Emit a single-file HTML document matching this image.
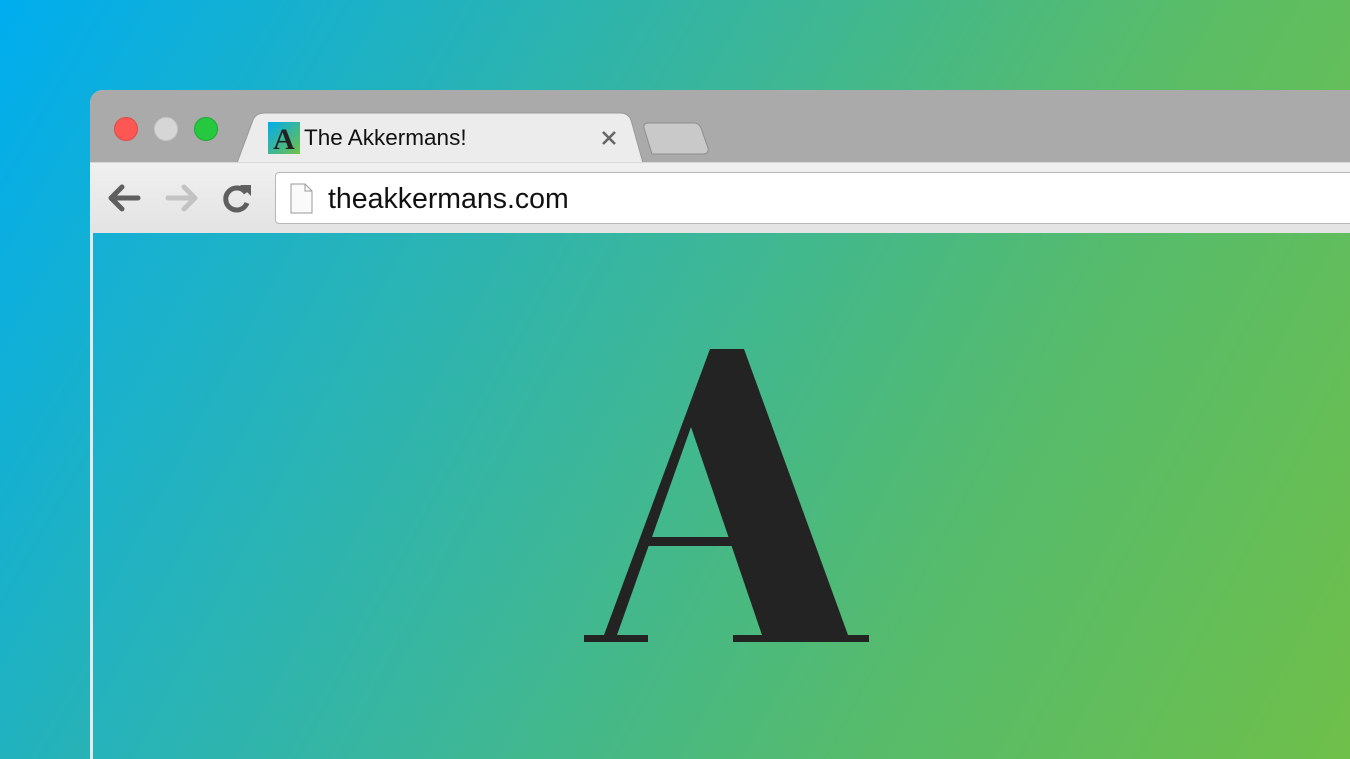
<!DOCTYPE html>
<html><head><meta charset="utf-8"><style>
*{margin:0;padding:0;box-sizing:border-box}
html,body{width:1350px;height:759px;overflow:hidden}
body{position:relative;background:linear-gradient(120deg,#00adef 0%,#36b5a0 40%,#5dbd63 70%,#76c043 100%);font-family:"Liberation Sans",sans-serif}
.win{position:absolute;left:90px;top:90px;width:1300px;height:700px;border-top-left-radius:13px;overflow:hidden;background:#e8e8e8}
.title{position:absolute;left:0;top:0;right:0;height:72px;background:#aaaaaa}
.dot{position:absolute;top:27px;width:24px;height:24px;border-radius:50%}
.tool{position:absolute;left:0;top:72px;right:0;height:71px;background:linear-gradient(#f0f0f0,#e3e3e3);border-top:1px solid #d8d8d8}
.content{position:absolute;left:3px;top:143px;right:0;bottom:0;background:linear-gradient(118deg,#14b0d6 0%,#38b69f 35%,#56bb6c 65%,#72c046 100%)}
.addr{position:absolute;left:185px;top:9px;width:1200px;height:52px;background:#fff;border:1px solid #b8b8b8;border-radius:4px}
.url{position:absolute;left:52px;top:10px;font-size:28.5px;color:#111}
.tabtxt{position:absolute;left:214px;top:35px;font-size:22.5px;color:#111}
</style></head><body>
<div class="win">
<div class="title">
<div class="dot" style="left:24px;background:#fc5753;border:1px solid #de4a45"></div>
<div class="dot" style="left:64px;background:#d6d6d6;border:1px solid #c6c6c6"></div>
<div class="dot" style="left:104px;background:#26c840;border:1px solid #1aab2e"></div>
<svg style="position:absolute;left:0;top:0" width="700" height="74">
<path d="M147 73 L163 30 Q166 23 175 23 L530 23 Q538 23 541 30 L553 73 Z" fill="#ececec" stroke="#9a9a9a" stroke-width="1"/>
<path d="M562 64 L554 38 Q553 33 559 33 L604 33 Q609 33 611 38 L618 58 Q619 64 613 64 Z" fill="#c9c9c9" stroke="#8e8e8e" stroke-width="1"/>
<defs><linearGradient id="fg" x1="0" y1="0" x2="1" y2="1"><stop offset="0" stop-color="#00adef"/><stop offset="1" stop-color="#72c046"/></linearGradient></defs>
<rect x="178" y="32" width="32" height="32" fill="url(#fg)"/>
<text x="194" y="59" text-anchor="middle" font-family="Liberation Serif,serif" font-weight="bold" font-size="30" fill="#222">A</text>
<path d="M513 42 L525 54 M525 42 L513 54" stroke="#666" stroke-width="2.6"/>
</svg>
<div class="tabtxt">The Akkermans!</div>
</div>
<div class="tool">
<svg style="position:absolute;left:0;top:0" width="180" height="70">
<path d="M48 35 L22 35 M32 24 L21 35 L32 46" fill="none" stroke="#5f5f5f" stroke-width="5" stroke-linecap="round" stroke-linejoin="round"/>
<path d="M78 35 L104 35 M94 24 L105 35 L94 46" fill="none" stroke="#c3c3c3" stroke-width="5" stroke-linecap="round" stroke-linejoin="round"/>
<path d="M156 30 A11 11 0 1 0 157 40" fill="none" stroke="#5f5f5f" stroke-width="5"/>
<path d="M150 22 L161 22 L161 33 Z" fill="#5f5f5f"/>
</svg>
<div class="addr">
<svg style="position:absolute;left:14px;top:10px" width="24" height="32"><path d="M1 1 L15 1 L22 8 L22 30 L1 30 Z" fill="#fafafa" stroke="#9a9a9a"/><path d="M15 1 L15 8 L22 8" fill="none" stroke="#9a9a9a"/></svg>
<div class="url">theakkermans.com</div>
</div>
</div>
<div class="content"></div>
</div>
<svg style="position:absolute;left:0;top:0" width="1350" height="759">
<path fill-rule="evenodd" fill="#232323" d="M710 349 L744 349 L848 635 L869 635 L869 642 L733 642 L733 635 L762 635 L731.6 546 L648.6 546 L617 635 L648 635 L648 642 L584 642 L584 635 L604 635 Z M691 427 L728.5 537 L652 537 Z"/>
</svg>
</body></html>
